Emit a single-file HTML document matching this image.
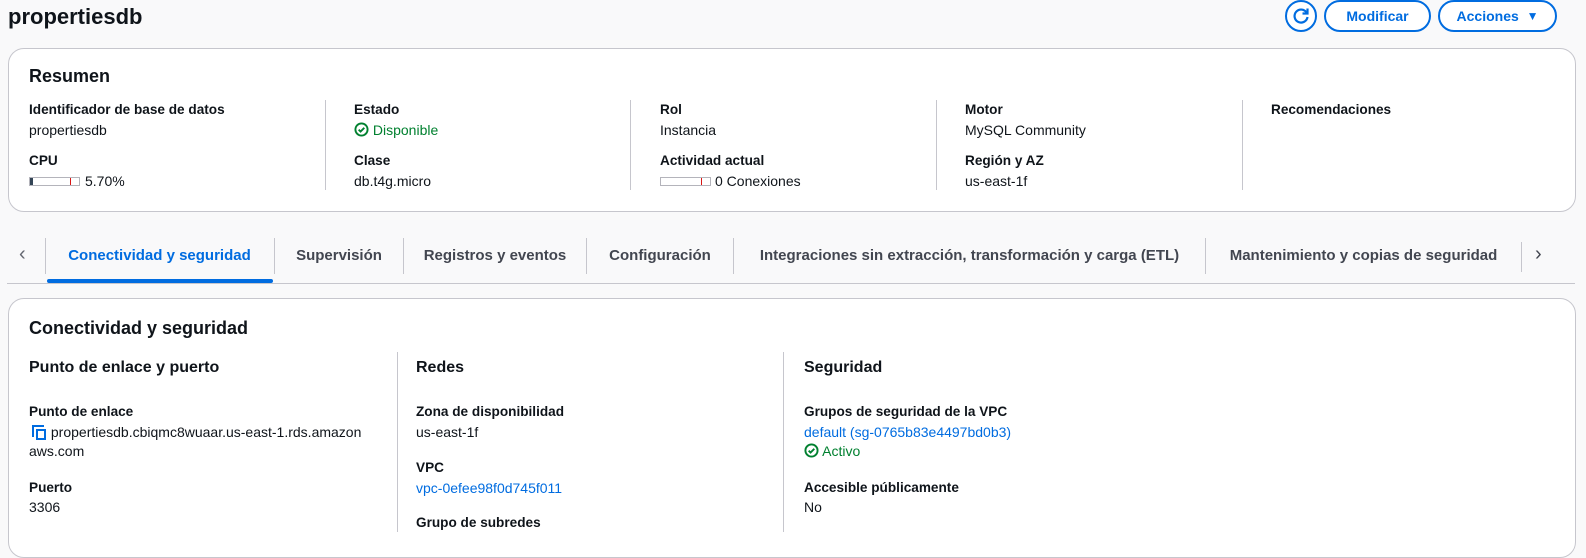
<!DOCTYPE html>
<html><head><meta charset="utf-8"><style>
*{margin:0;padding:0;box-sizing:border-box}
body{width:1586px;height:528px;overflow:hidden;background:#f9f9fa;font-family:"Liberation Sans",sans-serif;color:#0f141a;position:relative;font-size:14px}
.a{position:absolute;white-space:nowrap;line-height:20px}
.b{font-weight:bold;font-size:13.6px}
.card{position:absolute;background:#fff;border:1px solid #c6c6cd;border-radius:16px}
.vl{position:absolute;width:1px;background:#c6c6cd}
.lk{color:#006ce0}
.ok{color:#00802f}
.btn{position:absolute;height:32px;border:2px solid #006ce0;border-radius:20px;color:#006ce0;font-weight:bold;font-size:14px;display:flex;align-items:center;justify-content:center;background:#fff}
.tab{position:absolute;top:246px;font-weight:bold;font-size:15px;color:#424650;white-space:nowrap;line-height:20px;text-align:center}
.ts{position:absolute;top:238px;height:36px;width:1px;background:#c6c6cd}
.bar{position:absolute;width:51px;height:9px;border:1px solid #b4b4bb;background:#fff}
</style></head><body>
<div class="a" style="left:8px;top:2px;font-size:22px;line-height:30px;font-weight:bold">propertiesdb</div>
<div class="btn" style="left:1285px;top:0;width:32px;padding:0"><svg width="20" height="20" viewBox="0 0 20 20"><path d="M15.5 6.5A6.5 6.5 0 1 0 16.5 11" fill="none" stroke="#006ce0" stroke-width="2.2"/><path d="M16.5 2.5v5h-5" fill="none" stroke="#006ce0" stroke-width="2.2"/></svg></div>
<div class="btn" style="left:1324px;top:0;width:107px">Modificar</div>
<div class="btn" style="left:1438px;top:0;width:119px">Acciones&nbsp;&nbsp;<span style="font-size:12px">▼</span></div>

<div class="card" style="left:8px;top:48px;width:1568px;height:164px"></div>
<div class="a" style="left:29px;top:64px;font-size:18px;line-height:24px;font-weight:bold">Resumen</div>
<div class="vl" style="left:325px;top:100px;height:90px"></div>
<div class="vl" style="left:630px;top:100px;height:90px"></div>
<div class="vl" style="left:936px;top:100px;height:90px"></div>
<div class="vl" style="left:1242px;top:100px;height:90px"></div>

<div class="a b" style="left:29px;top:100px">Identificador de base de datos</div>
<div class="a" style="left:29px;top:120px">propertiesdb</div>
<div class="a b" style="left:29px;top:151px">CPU</div>
<div class="bar" style="left:29px;top:177px"><div style="position:absolute;left:0;top:0;width:3px;height:7px;background:#345"></div><div style="position:absolute;left:40px;top:0;width:1px;height:7px;background:#d91515"></div></div>
<div class="a" style="left:85px;top:171px">5.70%</div>

<div class="a b" style="left:354px;top:100px">Estado</div>
<div class="a ok" style="left:354px;top:120px"><svg width="15" height="15" viewBox="0 0 16 16" style="vertical-align:-2px"><circle cx="8" cy="8" r="6.5" fill="none" stroke="#00802f" stroke-width="2"/><path d="M5 8.2l2 2 4-4" fill="none" stroke="#00802f" stroke-width="2"/></svg> Disponible</div>
<div class="a b" style="left:354px;top:151px">Clase</div>
<div class="a" style="left:354px;top:171px">db.t4g.micro</div>

<div class="a b" style="left:660px;top:100px">Rol</div>
<div class="a" style="left:660px;top:120px">Instancia</div>
<div class="a b" style="left:660px;top:151px">Actividad actual</div>
<div class="bar" style="left:660px;top:177px"><div style="position:absolute;left:40px;top:0;width:1px;height:7px;background:#d91515"></div></div>
<div class="a" style="left:715px;top:171px">0 Conexiones</div>

<div class="a b" style="left:965px;top:100px">Motor</div>
<div class="a" style="left:965px;top:120px">MySQL Community</div>
<div class="a b" style="left:965px;top:151px">Región y AZ</div>
<div class="a" style="left:965px;top:171px">us-east-1f</div>

<div class="a b" style="left:1271px;top:100px">Recomendaciones</div>

<div class="a" style="left:19px;top:244px;font-size:20px;color:#656871">‹</div>
<div class="ts" style="left:45px"></div>
<div class="tab" style="left:46px;width:227px;color:#006ce0">Conectividad y seguridad</div>
<div style="position:absolute;left:47px;top:279px;width:226px;height:4px;background:#006ce0;border-radius:2px"></div>
<div class="ts" style="left:274px"></div>
<div class="tab" style="left:275px;width:128px">Supervisión</div>
<div class="ts" style="left:403px"></div>
<div class="tab" style="left:404px;width:182px">Registros y eventos</div>
<div class="ts" style="left:586px"></div>
<div class="tab" style="left:587px;width:146px">Configuración</div>
<div class="ts" style="left:733px"></div>
<div class="tab" style="left:734px;width:471px">Integraciones sin extracción, transformación y carga (ETL)</div>
<div class="ts" style="left:1205px"></div>
<div class="tab" style="left:1206px;width:315px">Mantenimiento y copias de seguridad</div>
<div class="ts" style="left:1521px;top:242px;height:30px"></div>
<div class="a" style="left:1535px;top:244px;font-size:20px;color:#424650">›</div>
<div style="position:absolute;left:7px;top:283px;width:1568px;height:1px;background:#c6c6cd"></div>

<div class="card" style="left:8px;top:298px;width:1568px;height:260px"></div>
<div class="a" style="left:29px;top:316px;font-size:18px;line-height:24px;font-weight:bold">Conectividad y seguridad</div>
<div class="vl" style="left:397px;top:352px;height:180px"></div>
<div class="vl" style="left:783px;top:352px;height:180px"></div>

<div class="a" style="left:29px;top:357px;font-size:16px;line-height:22px;font-weight:bold">Punto de enlace y puerto</div>
<div class="a b" style="left:29px;top:402px">Punto de enlace</div>
<div class="a" style="left:29px;top:422px"><svg width="18" height="16" viewBox="0 0 18 16" style="vertical-align:-3px"><path d="M4 13V2h11" fill="none" stroke="#006ce0" stroke-width="2"/><rect x="8" y="6" width="8" height="9" fill="none" stroke="#006ce0" stroke-width="2"/></svg> propertiesdb.cbiqmc8wuaar.us-east-1.rds.amazon</div>
<div class="a" style="left:29px;top:441px">aws.com</div>
<div class="a b" style="left:29px;top:478px">Puerto</div>
<div class="a" style="left:29px;top:497px">3306</div>

<div class="a" style="left:416px;top:357px;font-size:16px;line-height:22px;font-weight:bold">Redes</div>
<div class="a b" style="left:416px;top:402px">Zona de disponibilidad</div>
<div class="a" style="left:416px;top:422px">us-east-1f</div>
<div class="a b" style="left:416px;top:458px">VPC</div>
<div class="a lk" style="left:416px;top:478px">vpc-0efee98f0d745f011</div>
<div class="a b" style="left:416px;top:513px">Grupo de subredes</div>

<div class="a" style="left:804px;top:357px;font-size:16px;line-height:22px;font-weight:bold">Seguridad</div>
<div class="a b" style="left:804px;top:402px">Grupos de seguridad de la VPC</div>
<div class="a lk" style="left:804px;top:422px">default (sg-0765b83e4497bd0b3)</div>
<div class="a ok" style="left:804px;top:441px"><svg width="15" height="15" viewBox="0 0 16 16" style="vertical-align:-2px"><circle cx="8" cy="8" r="6.5" fill="none" stroke="#00802f" stroke-width="2"/><path d="M5 8.2l2 2 4-4" fill="none" stroke="#00802f" stroke-width="2"/></svg> Activo</div>
<div class="a b" style="left:804px;top:478px">Accesible públicamente</div>
<div class="a" style="left:804px;top:497px">No</div>
</body></html>
